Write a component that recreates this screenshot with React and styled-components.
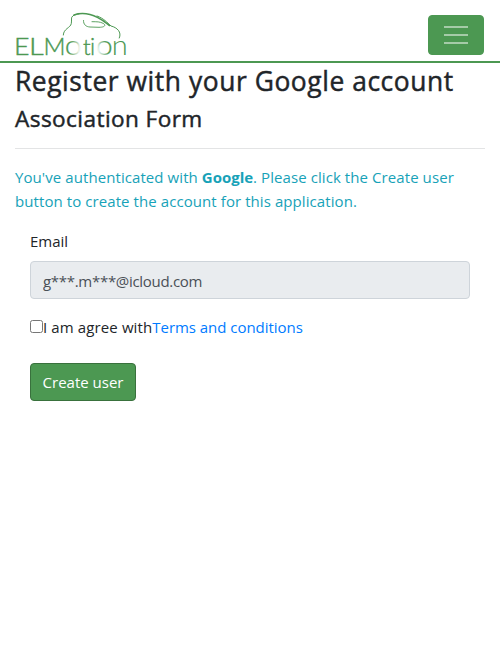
import React from "react";
import styled, { createGlobalStyle } from "styled-components";

const GlobalStyle = createGlobalStyle`
  *, *::before, *::after { box-sizing: border-box; }
  body {
    margin: 0;
    background: #fff;
    color: #212529;
    font-family: "Segoe UI", "Open Sans", "Noto Sans", sans-serif;
    font-size: 15px;
    line-height: 24px;
  }
`;

const Navbar = styled.header`
  display: flex;
  align-items: flex-start;
  justify-content: space-between;
  height: 63px;
  padding: 0 16px 0 15px;
  border-bottom: 2px solid #4c9852;
`;

const Logo = styled.svg`
  display: block;
  width: 113px;
  height: 61px;
`;

const Toggler = styled.button`
  display: flex;
  flex-direction: column;
  align-items: center;
  justify-content: center;
  gap: 6px;
  width: 56px;
  height: 40px;
  margin-top: 15px;
  padding: 0;
  border: 1px solid #4c9852;
  border-radius: 4px;
  background: #4c9852;
`;

const TogglerBar = styled.span`
  width: 24px;
  height: 2px;
  background: #a5cba8;
`;

const Content = styled.main`
  padding: 0 15px;
`;

const Title = styled.h1`
  margin: 0 0 4px;
  font-size: 26.4px;
  font-weight: 400;
  line-height: 36px;
  letter-spacing: 0.56px;
  -webkit-text-stroke: 0.45px currentColor;
  white-space: nowrap;
`;

const Subtitle = styled(Title).attrs({ as: "h2" })`
  margin: 0;
  font-size: 22.6px;
  line-height: 32px;
  letter-spacing: 0.42px;
`;

const Divider = styled.hr`
  height: 1px;
  margin: 13px 0 16px;
  border: 0;
  background: #e3e4e5;
`;

const Info = styled.p`
  margin: 0;
  color: #17a2b8;
  letter-spacing: 0.08px;
`;

const Provider = styled.strong`
  font-weight: 700;
  letter-spacing: -0.02px;
`;

const Form = styled.form`
  padding: 16px 15px 0;
`;

const Label = styled.label`
  display: block;
  margin-bottom: 8px;
`;

const Input = styled.input`
  display: block;
  width: 100%;
  height: 38px;
  padding: 1px 12px 0;
  border: 1px solid #ced4da;
  border-radius: 4px;
  background: #e9ecef;
  color: #495057;
  font: inherit;
  letter-spacing: -0.3px;
`;

const Agreement = styled.div`
  display: flex;
  align-items: center;
  height: 24px;
  margin: 16px 0 24px;
`;

const Checkbox = styled.input`
  width: 13px;
  height: 13px;
  margin: 0 0 2px;
`;

const AgreementLabel = styled.label`
  letter-spacing: 0.12px;
`;

const Link = styled.a`
  color: #007bff;
  text-decoration: none;
  letter-spacing: -0.04px;
`;

const Submit = styled.button`
  width: 106px;
  height: 38px;
  padding: 0 0 1px;
  border: 1px solid #39713d;
  border-radius: 4px;
  background: #4c9852;
  color: #fff;
  font: inherit;
  white-space: nowrap;
`;

const Letter = styled.text`
  font-family: Lato, sans-serif;
  font-weight: 300;
  font-size: ${(p) => p.$size || 23.5}px;
`;

function BrandLogo() {
  return (
    <Logo viewBox="15 0 113 61" role="img" aria-label="ELMotion">
      <defs>
        <linearGradient id="fadeRight" x1="0" x2="1" y1="0" y2="0.3">
          <stop offset="0.45" stopColor="#4c9852" />
          <stop offset="0.95" stopColor="#4c9852" stopOpacity="0.1" />
        </linearGradient>
        <linearGradient id="fadeLeft" x1="1" x2="0" y1="0" y2="0.5">
          <stop offset="0.5" stopColor="#4c9852" />
          <stop offset="0.95" stopColor="#4c9852" stopOpacity="0.1" />
        </linearGradient>
      </defs>
      <g fill="none" stroke="#4c9852" strokeLinecap="round" strokeLinejoin="round">
        <path d="M63.300 35C63.500 28.500 70.500 28 71.300 23.500C72 20 70.500 17.500 73 15.800C75 14.500 77 14.200 79 14" strokeWidth="1" />
        <path d="M74 15C79 13.200 85 13.300 90 14.500C99 16.700 104 21.500 109.500 25.500" strokeWidth="1.600" />
        <path d="M97 16C104 18.500 107 22.500 111 26C117 27.500 122 32 119.300 38" strokeWidth="1" />
        <path d="M83.500 20.500C83.300 24.500 86 26.800 90 27L99 27.300C105.500 27.300 106 24.800 103 23.300C100 21.700 97 21.700 92 21.700" strokeWidth="0.900" />
      </g>
      <g fill="#4c9852" stroke="#4c9852" strokeWidth="0.4">
        <Letter y="55" x="14" textLength="15.500" lengthAdjust="spacingAndGlyphs">E</Letter>
        <Letter y="55" x="29" textLength="14.700" lengthAdjust="spacingAndGlyphs">L</Letter>
        <Letter y="55" x="43.500" textLength="22" lengthAdjust="spacingAndGlyphs">M</Letter>
        <Letter y="55" x="83" $size={22}>t</Letter>
        <Letter y="55" x="90" $size={23}>i</Letter>
      </g>
      <g fill="#4c9852">
        <Letter y="55" x="64.800" textLength="17" lengthAdjust="spacingAndGlyphs" $size={27} fill="url(#fadeRight)" stroke="url(#fadeRight)" strokeWidth="0.2">o</Letter>
        <Letter y="55" x="95.800" textLength="17" lengthAdjust="spacingAndGlyphs" $size={27} fill="url(#fadeLeft)" stroke="url(#fadeLeft)" strokeWidth="0.2">o</Letter>
        <Letter y="55" x="111.800" textLength="16" lengthAdjust="spacingAndGlyphs" $size={27}>n</Letter>
      </g>
    </Logo>
  );
}

export default function App() {
  return (
    <>
      <GlobalStyle />
      <Navbar>
        <BrandLogo />
        <Toggler type="button" aria-label="Toggle navigation">
          <TogglerBar />
          <TogglerBar />
          <TogglerBar />
        </Toggler>
      </Navbar>
      <Content>
        <Title>Register with your Google account</Title>
        <Subtitle>Association Form</Subtitle>
        <Divider />
        <Info>
          <span>You've authenticated with </span>
          <Provider>Google</Provider>
          <span>. Please click the Create user</span>
          <br />
          <span>button to create the account for this application.</span>
        </Info>
        <Form onSubmit={(e) => e.preventDefault()}>
          <Label htmlFor="email">Email</Label>
          <Input id="email" defaultValue="g***.m***@icloud.com" readOnly />
          <Agreement>
            <Checkbox type="checkbox" id="agree" />
            <AgreementLabel htmlFor="agree">I am agree with</AgreementLabel>
            <Link href="#terms">Terms and conditions</Link>
          </Agreement>
          <Submit type="submit">Create user</Submit>
        </Form>
      </Content>
    </>
  );
}
